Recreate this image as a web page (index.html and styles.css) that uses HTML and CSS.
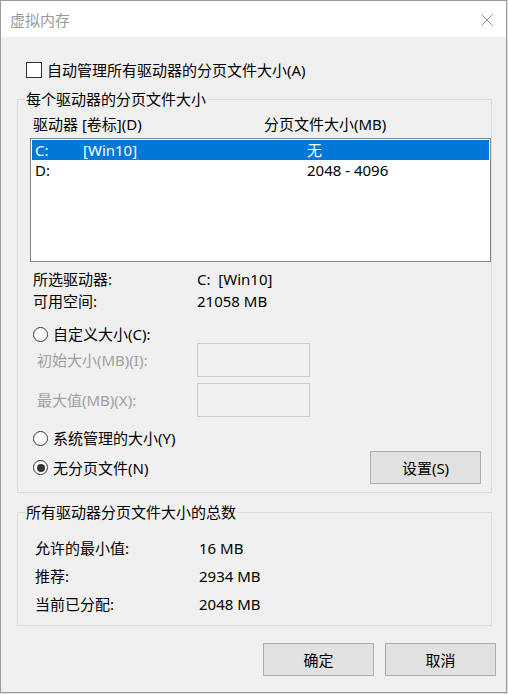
FILE: index.html
```html
<!DOCTYPE html>
<html lang="zh-CN">
<head>
<meta charset="utf-8">
<title>虚拟内存</title>
<link rel="stylesheet" href="styles.css">
</head>
<body>
<div class="window">
  <div class="titlebar">
    <span class="title">虚拟内存</span>
    <svg class="close" width="12" height="12" viewBox="0 0 12 12"><path d="M0.5 0.5L11.5 11.5M11.5 0.5L0.5 11.5" stroke="#8f8f8f" stroke-width="1" fill="none"/></svg>
  </div>
  <div class="content">
    <div class="check-row"><span class="checkbox"></span><span class="text">自动管理所有驱动器的分页文件大小(A)</span></div>

    <fieldset class="group group-drives">
      <legend>每个驱动器的分页文件大小</legend>
      <div class="list-header"><span class="col-drive">驱动器 [卷标](D)</span><span class="col-size">分页文件大小(MB)</span></div>
      <div class="listbox">
        <div class="list-row selected"><span>C:</span><span>[Win10]</span><span>无</span></div>
        <div class="list-row"><span>D:</span><span></span><span>2048 - 4096</span></div>
      </div>
      <div class="info">
        <div class="info-row"><span class="info-label">所选驱动器:</span><span>C:&nbsp; [Win10]</span></div>
        <div class="info-row"><span class="info-label">可用空间:</span><span>21058 MB</span></div>
      </div>
      <div class="radio-row first"><span class="radio"></span><span class="text">自定义大小(C):</span></div>
      <div class="input-row"><span class="input-label">初始大小(MB)(I):</span><span class="input-box"></span></div>
      <div class="input-row second"><span class="input-label">最大值(MB)(X):</span><span class="input-box"></span></div>
      <div class="radio-row sys"><span class="radio"></span><span class="text">系统管理的大小(Y)</span></div>
      <div class="radio-row last">
        <span class="radio-group"><span class="radio on"></span><span class="text">无分页文件(N)</span></span>
        <span class="btn set-btn">设置(S)</span>
      </div>
    </fieldset>

    <fieldset class="group group-total">
      <legend>所有驱动器分页文件大小的总数</legend>
      <div class="totals">
        <div class="total-row"><span class="total-label">允许的最小值:</span><span>16 MB</span></div>
        <div class="total-row"><span class="total-label">推荐:</span><span>2934 MB</span></div>
        <div class="total-row"><span class="total-label">当前已分配:</span><span>2048 MB</span></div>
      </div>
    </fieldset>

    <div class="footer">
      <span class="btn">确定</span>
      <span class="btn">取消</span>
    </div>
  </div>
</div>
</body>
</html>
```

FILE: styles.css
```css
* { box-sizing: border-box; }
html, body { margin: 0; padding: 0; }
body {
  background: #dedede;
  font-family: "Noto Sans", "Noto Sans CJK SC", sans-serif;
  font-size: 15px;
  color: #000;
}
.window {
  width: 507px;
  height: 693px;
  border: 1px solid #9b9b9b;
  background: #f0f0f0;
  display: flex;
  flex-direction: column;
}
.titlebar {
  height: 36px;
  flex-shrink: 0;
  background: #fff;
  display: flex;
  align-items: center;
  justify-content: space-between;
  padding: 1px 13px 0 9px;
}
.title { color: #9a9a9a; line-height: 18px; }
.close { display: block; }

.content { display: flex; flex-direction: column; }

.check-row {
  margin: 25px 0 0 25px;
  height: 16px;
  display: flex;
  align-items: center;
  gap: 5px;
}
.checkbox {
  width: 16px;
  height: 16px;
  border: 1px solid #333;
  background: #fff;
  flex-shrink: 0;
}
.text { line-height: 18px; white-space: nowrap; }

.group {
  margin: 12px 0 0 16px;
  width: 475px;
  min-width: 0;
  padding: 0 0 8px 0;
  border: 1px solid #dcdcdc;
}
.group legend {
  margin-left: 7px;
  padding: 0 1px;
  line-height: 18px;
}

.list-header {
  margin: 7px 0 0 15px;
  display: flex;
  line-height: 18px;
}
.col-drive { width: 231px; }

.listbox {
  margin: 5px 0 0 12px;
  width: 461px;
  height: 124px;
  border: 1px solid #828790;
  background: #fff;
  padding: 1px;
}
.list-row {
  height: 20px;
  line-height: 20px;
  display: grid;
  grid-template-columns: 48px 224px 1fr;
  padding-left: 3px;
}
.list-row.selected { background: #0078d7; color: #fff; }

.info { margin: 6px 0 0 15px; }
.info-row { display: flex; height: 22px; line-height: 22px; }
.info-label { width: 164px; }

.radio-row {
  margin-left: 15px;
  height: 18px;
  display: flex;
  align-items: center;
  gap: 5px;
}
.radio-row.first { margin-top: 13px; }
.radio-row.sys { margin-top: 12px; }
.radio-row.last {
  margin-top: 4px;
  height: 33px;
  justify-content: space-between;
  margin-right: 10px;
}
.radio-group { display: flex; align-items: center; gap: 5px; }
.radio {
  width: 15px;
  height: 15px;
  border: 1px solid #333;
  border-radius: 50%;
  background: #fff;
  flex-shrink: 0;
  display: flex;
  align-items: center;
  justify-content: center;
}
.radio.on::after {
  content: "";
  width: 8px;
  height: 8px;
  border-radius: 50%;
  background: #333;
}

.input-row {
  margin-left: 19px;
  display: flex;
  align-items: center;
}
.input-row.second { margin-top: 6px; }
.input-label { width: 160px; color: #a0a0a0; line-height: 18px; }
.input-box {
  width: 113px;
  height: 34px;
  border: 1px solid #cccccc;
  background: #f0f0f0;
}

.btn {
  width: 111px;
  height: 33px;
  border: 1px solid #adadad;
  background: #e1e1e1;
  display: flex;
  align-items: center;
  justify-content: center;
  line-height: 18px;
}

.group-total { margin-top: 10px; padding-bottom: 7px; }
.totals { margin: 13px 0 0 17px; }
.total-row { display: flex; height: 28px; line-height: 28px; }
.total-label { width: 164px; }

.footer {
  margin-top: 17px;
  display: flex;
  justify-content: flex-end;
  gap: 11px;
  padding-right: 10px;
}
```
